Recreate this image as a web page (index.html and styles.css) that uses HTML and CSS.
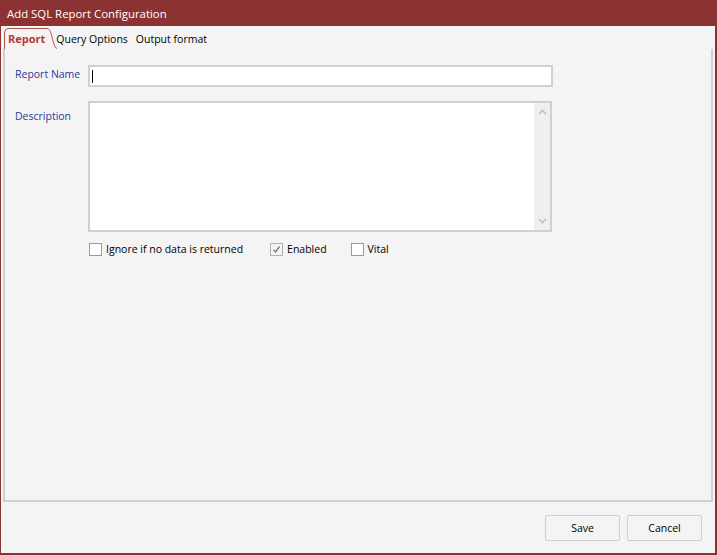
FILE: index.html
```html
<!DOCTYPE html>
<html>
<head>
	<title>Add SQL Report Configuration</title>
	<meta charset="utf-8">
	<link rel="stylesheet" href="styles.css">
</head>
<body>
<div class="window">
	<div class="title_bar">Add SQL Report Configuration</div>

	<div class="tabs">
		<div class="tab tab_active">
			<span>Report</span>
			<svg class="tab_curve" width="10" height="21" viewBox="0 0 10 21">
				<path d="M0 0.5 C2 0.5 3 2 4.5 7 C6 13 7.5 20 10 20.5 L0 20.5 Z" fill="#f7f3f3"/>
				<path d="M0 0.5 C2 0.5 3 2 4.5 7 C6 13 7.5 20 10 20.5" fill="none" stroke="#a85a5a" stroke-width="1"/>
			</svg>
		</div>
		<div class="tab">Query Options</div>
		<div class="tab">Output format</div>
	</div>

	<div class="tab_page">
		<div class="form_row">
			<label class="field_label">Report Name</label>
			<div class="text_box"><span class="caret"></span></div>
		</div>

		<div class="form_row row_desc">
			<label class="field_label label_desc">Description</label>
			<div class="text_area">
				<div class="scroll_bar">
					<svg width="9" height="6" viewBox="0 0 9 6"><path d="M1 5 L4.5 1.5 L8 5" fill="none" stroke="#c2c2c2" stroke-width="1.6"/></svg>
					<svg width="9" height="6" viewBox="0 0 9 6"><path d="M1 1 L4.5 4.5 L8 1" fill="none" stroke="#c2c2c2" stroke-width="1.6"/></svg>
				</div>
			</div>
		</div>

		<div class="check_row">
			<label class="check check_ignore"><span class="box"></span>Ignore if no data is returned</label>
			<label class="check check_enabled"><span class="box box_on">
				<svg width="9" height="9" viewBox="0 0 9 9"><path d="M1.5 4.8 L3.6 7 L7.5 1.5" fill="none" stroke="#777" stroke-width="1.3"/></svg>
			</span>Enabled</label>
			<label class="check"><span class="box"></span>Vital</label>
		</div>
	</div>

	<div class="button_bar">
		<button class="btn">Save</button>
		<button class="btn">Cancel</button>
	</div>
</div>
</body>
</html>
```

FILE: styles.css
```css
html, body {
	margin: 0;
	padding: 0;
}

body {
	font-family: "Open Sans", "Noto Sans", sans-serif;
	font-size: 10.5px;
	color: #000;
	background: #f4f4f4;
}

.window {
	width: 717px;
	height: 555px;
	box-sizing: border-box;
	border-left: 1px solid #8b3232;
	border-right: 2px solid #8b3232;
	border-bottom: 2px solid #8b3232;
	background: #f4f4f4;
	display: flex;
	flex-direction: column;
}

.title_bar {
	height: 26px;
	margin-left: -1px;
	margin-right: -2px;
	background: #8b3232;
	color: #fff;
	font-size: 11.4px;
	line-height: 28px;
	padding-left: 7px;
	border-top-right-radius: 3px;
}

.tabs {
	display: flex;
	height: 21px;
	margin-top: 2px;
	padding-left: 3px;
	align-items: flex-end;
	gap: 8px;
}

.tab {
	line-height: 20px;
	height: 20px;
}

.tab_active {
	position: relative;
	color: #b03a3a;
	font-weight: bold;
	font-size: 11px;
	padding: 0 2px 0 3px;
	margin-right: 1px;
	background: #f7f3f3;
	border: 1px solid #a85a5a;
	border-bottom: none;
	border-right: none;
	border-top-left-radius: 5px;
}

.tab_curve {
	position: absolute;
	right: -10px;
	top: -1px;
}

.tab_page {
	flex: 1;
	margin: 0 2px 0 2px;
	border-left: 2px solid #d0d0d0;
	border-right: 2px solid #d0d0d0;
	border-bottom: 2px solid #d0d0d0;
	padding: 16px 0 0 10px;
}

.form_row {
	display: flex;
	align-items: flex-start;
}

.row_desc {
	margin-top: 14px;
}

.field_label {
	width: 73px;
	color: #2b3a9a;
	padding-top: 2px;
}

.label_desc {
	padding-top: 8px;
}

.text_box {
	width: 459px;
	height: 18px;
	background: #fff;
	border: 2px solid #d0d0d0;
	display: flex;
	align-items: center;
	padding-left: 2px;
}

.caret {
	width: 1px;
	height: 13px;
	background: #000;
}

.text_area {
	width: 460px;
	height: 127px;
	background: #fff;
	border: 2px solid #d0d0d0;
	display: flex;
	justify-content: flex-end;
}

.scroll_bar {
	width: 16px;
	background: #efefef;
	display: flex;
	flex-direction: column;
	justify-content: space-between;
	align-items: center;
	padding: 6px 0 6px;
}

.check_row {
	display: flex;
	margin-top: 9px;
	padding-left: 74px;
}

.check {
	display: flex;
	align-items: center;
	height: 16px;
}

.check_ignore {
	margin-right: 27px;
}

.check_enabled {
	margin-right: 24px;
}

.box {
	width: 11px;
	height: 11px;
	border: 1px solid #9a9a9a;
	background: #fff;
	margin-right: 4px;
	display: flex;
	align-items: center;
	justify-content: center;
}

.box_on {
	background: #f4f4f4;
	border-color: #b0b0b0;
}

.button_bar {
	height: 51px;
	display: flex;
	justify-content: flex-end;
	align-items: flex-start;
	padding: 13px 13px 0 0;
	box-sizing: border-box;
	gap: 7px;
}

.btn {
	width: 75px;
	height: 26px;
	font-family: "Open Sans", "Noto Sans", sans-serif;
	font-size: 10.5px;
	background: #f4f4f4;
	border: 1px solid #cfcfcf;
	border-radius: 2px;
	color: #000;
	padding: 0;
}
```
